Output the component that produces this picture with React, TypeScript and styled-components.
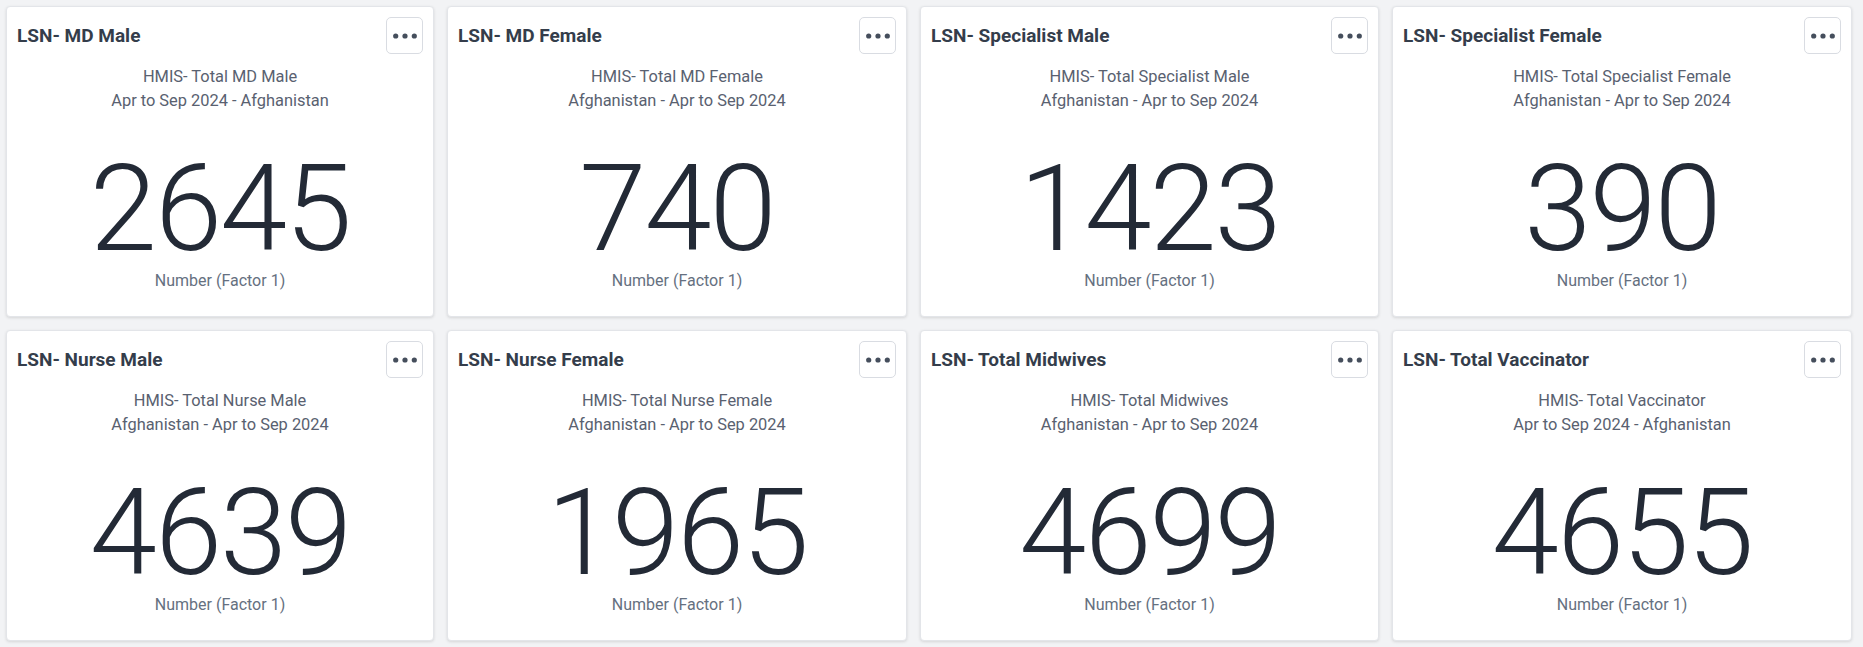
import React from "react";
import styled, { createGlobalStyle } from "styled-components";

const GlobalStyle = createGlobalStyle`
  html, body {
    margin: 0;
    padding: 0;
    background: #f2f3f5;
    font-family: Roboto, "Noto Sans", Arial, sans-serif;
  }
`;

const Grid = styled.div`
  display: grid;
  grid-template-columns: 428px 460px 459px 460px;
  grid-auto-rows: 311px;
  gap: 13px;
  padding: 6px;
`;

const Card = styled.div`
  background: #ffffff;
  border: 1px solid #e3e5e9;
  border-radius: 4px;
  box-shadow: 0 1px 3px rgba(0, 0, 0, 0.12);
  box-sizing: border-box;
  display: flex;
  flex-direction: column;
  overflow: hidden;
`;

const Header = styled.div`
  display: flex;
  align-items: center;
  justify-content: space-between;
  padding: 10px 10px 0 10px;
  height: 37px;
`;

const Title = styled.h3`
  margin: 0;
  font-size: 19px;
  font-weight: 700;
  color: #343d4b;
`;

const MenuButton = styled.button`
  width: 37px;
  height: 37px;
  padding: 0;
  border: 1px solid #d9dce2;
  border-radius: 5px;
  background: #ffffff;
  display: flex;
  align-items: center;
  justify-content: center;
  cursor: pointer;
`;

const Subtitle = styled.div`
  margin-top: 11px;
  text-align: center;
  font-size: 16.4px;
  line-height: 24px;
  color: #596170;
`;

const Value = styled.div`
  margin-top: 46px;
  text-align: center;
  font-size: 121px;
  font-weight: 300;
  line-height: 100px;
  letter-spacing: -2px;
  color: #232a36;
`;

const Footer = styled.div`
  margin-top: 10px;
  text-align: center;
  font-size: 16px;
  line-height: 24px;
  color: #657080;
`;

const Dots = () => (
  <svg width="24" height="6" viewBox="0 0 24 6">
    <circle cx="2.7" cy="3" r="2.6" fill="#454e5c" />
    <circle cx="12" cy="3" r="2.6" fill="#454e5c" />
    <circle cx="21.3" cy="3" r="2.6" fill="#454e5c" />
  </svg>
);

type Item = { title: string; sub1: string; sub2: string; value: string };

const items: Item[] = [
  { title: "LSN- MD Male", sub1: "HMIS- Total MD Male", sub2: "Apr to Sep 2024 - Afghanistan", value: "2645" },
  { title: "LSN- MD Female", sub1: "HMIS- Total MD Female", sub2: "Afghanistan - Apr to Sep 2024", value: "740" },
  { title: "LSN- Specialist Male", sub1: "HMIS- Total Specialist Male", sub2: "Afghanistan - Apr to Sep 2024", value: "1423" },
  { title: "LSN- Specialist Female", sub1: "HMIS- Total Specialist Female", sub2: "Afghanistan - Apr to Sep 2024", value: "390" },
  { title: "LSN- Nurse Male", sub1: "HMIS- Total Nurse Male", sub2: "Afghanistan - Apr to Sep 2024", value: "4639" },
  { title: "LSN- Nurse Female", sub1: "HMIS- Total Nurse Female", sub2: "Afghanistan - Apr to Sep 2024", value: "1965" },
  { title: "LSN- Total Midwives", sub1: "HMIS- Total Midwives", sub2: "Afghanistan - Apr to Sep 2024", value: "4699" },
  { title: "LSN- Total Vaccinator", sub1: "HMIS- Total Vaccinator", sub2: "Apr to Sep 2024 - Afghanistan", value: "4655" },
];

export default function App() {
  return (
    <>
      <GlobalStyle />
      <Grid>
        {items.map((it) => (
          <Card key={it.title}>
            <Header>
              <Title>{it.title}</Title>
              <MenuButton aria-label="More">
                <Dots />
              </MenuButton>
            </Header>
            <Subtitle>
              <div>{it.sub1}</div>
              <div>{it.sub2}</div>
            </Subtitle>
            <Value>{it.value}</Value>
            <Footer>Number (Factor 1)</Footer>
          </Card>
        ))}
      </Grid>
    </>
  );
}
